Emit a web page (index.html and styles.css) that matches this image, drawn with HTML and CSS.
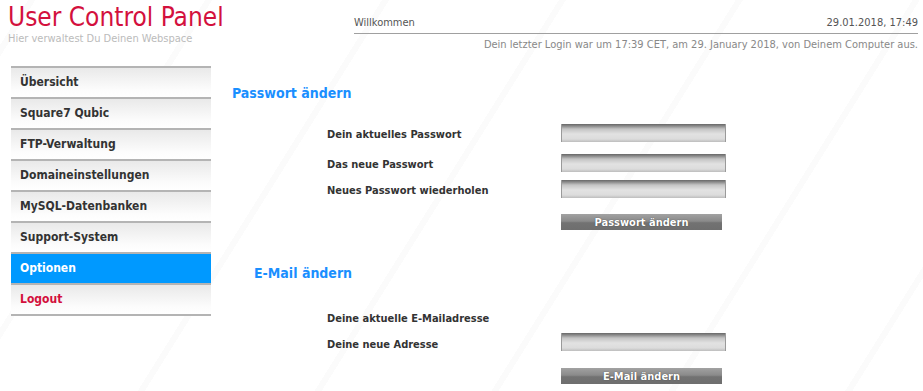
FILE: index.html
```html
<!DOCTYPE html>
<html lang="de">
<head>
  <meta charset="UTF-8" />
  <title>User Control Panel — Optionen</title>
  <link rel="stylesheet" href="styles.css">
</head>
<body>
  <header class="top">
    <div class="brand">
      <h1>User Control Panel</h1>
      <p>Hier verwaltest Du Deinen Webspace</p>
    </div>
    <div class="status">
      <div class="status-line">
        <span>Willkommen</span>
        <span>29.01.2018, 17:49</span>
      </div>
      <p class="last-login">Dein letzter Login war um 17:39 CET, am 29. January 2018, von Deinem Computer aus.</p>
    </div>
  </header>

  <div class="page">
    <nav class="menu">
      <a href="#">Übersicht</a>
      <a href="#">Square7 Qubic</a>
      <a href="#">FTP-Verwaltung</a>
      <a href="#">Domaineinstellungen</a>
      <a href="#">MySQL-Datenbanken</a>
      <a href="#">Support-System</a>
      <a href="#" class="active">Optionen</a>
      <a href="#" class="logout">Logout</a>
    </nav>

    <main class="content">
      <h2 class="pw-title">Passwort ändern</h2>
      <form class="form pw-form">
        <div class="row r1">
          <label>Dein aktuelles Passwort</label>
          <input type="password" />
        </div>
        <div class="row r2">
          <label>Das neue Passwort</label>
          <input type="password" />
        </div>
        <div class="row r3">
          <label>Neues Passwort wiederholen</label>
          <input type="password" />
        </div>
        <div class="row btn-row">
          <span></span>
          <button type="button">Passwort ändern</button>
        </div>
      </form>

      <h2 class="mail-title">E-Mail ändern</h2>
      <form class="form mail-form">
        <div class="row m1">
          <label>Deine aktuelle E-Mailadresse</label>
          <span></span>
        </div>
        <div class="row m2">
          <label>Deine neue Adresse</label>
          <input type="text" />
        </div>
        <div class="row btn-row mail-btn">
          <span></span>
          <button type="button">E-Mail ändern</button>
        </div>
      </form>
    </main>
  </div>
</body>
</html>
```

FILE: styles.css
```css
* {
  margin: 0;
  padding: 0;
  box-sizing: border-box;
}

body {
  font-family: Tahoma, "DejaVu Sans Condensed", "DejaVu Sans", sans-serif;
  font-size: 11px;
  color: #333;
  background-color: #fff;
  background-image:
    repeating-linear-gradient(-58deg, transparent 0, transparent 60px, rgba(0, 0, 0, 0.015) 60px, rgba(0, 0, 0, 0.015) 66px, transparent 66px, transparent 150px);
  min-height: 391px;
}

/* header */
.top {
  display: flex;
  padding-top: 3px;
}

.brand {
  width: 354px;
  padding-left: 8px;
}

.brand h1 {
  font-weight: normal;
  font-size: 26px;
  line-height: 28px;
  color: #d3103d;
}

.brand p {
  margin-top: 1px;
  font-size: 11px;
  color: #bbb;
}

.status {
  flex: 1;
  margin-right: 5px;
  padding-top: 13px;
}

.status-line {
  display: flex;
  justify-content: space-between;
  color: #555;
  padding-bottom: 4px;
  border-bottom: 1px solid #a0a0a0;
}

.last-login {
  text-align: right;
  color: #888;
  margin-top: 4px;
}

/* layout */
.page {
  display: flex;
  margin-top: 15px;
}

.menu {
  width: 200px;
  margin-left: 11px;
  border-top: 2px solid #b4b4b4;
  display: flex;
  flex-direction: column;
}

.menu a {
  display: block;
  height: 31px;
  line-height: 29px;
  padding-left: 9px;
  font-weight: bold;
  font-size: 12px;
  color: #333;
  text-decoration: none;
  background: linear-gradient(#e9e9e9, #fcfcfc 75%, #fff);
  border-bottom: 2px solid #b4b4b4;
}

.menu a.active {
  background: #0099ff;
  color: #fff;
}

.menu a.logout {
  color: #d3103d;
}

.content {
  flex: 1;
  padding-left: 21px;
}

h2 {
  font-size: 14px;
  font-weight: bold;
  color: #1a8fff;
}

.pw-title {
  margin-top: 19px;
}

.mail-title {
  margin-top: 35px;
  margin-left: 22px;
}

.form {
  margin-left: 95px;
}

.row {
  display: grid;
  grid-template-columns: 234px 165px;
  align-items: center;
}

.row label {
  font-weight: bold;
  padding-top: 2px;
}

.r1 { margin-top: 23px; }
.r2 { margin-top: 12px; }
.r3 { margin-top: 8px; }
.btn-row { margin-top: 16px; }

.m1 { margin-top: 29px; height: 14px; }
.m2 { margin-top: 9px; }
.m2 label { padding-top: 4px; }
.mail-btn { margin-top: 17px; }

input {
  display: block;
  width: 165px;
  height: 18px;
  border: none;
  border-left: 1px solid #9a9a9a;
  border-right: 1px solid #9a9a9a;
  background: linear-gradient(#676767 0, #8a8a8a 2px, #c4c4c4 5px, #e2e2e2 10px, #dcdcdc 15px, #bdbdbd 100%);
  outline: none;
}

button {
  display: block;
  width: 161px;
  height: 16px;
  border: none;
  font-family: inherit;
  font-size: 11px;
  font-weight: bold;
  color: #fff;
  text-shadow: 0 0 1px #333;
  background: linear-gradient(#a2a2a2, #8a8a8a 45%, #727272 55%, #6e6e6e);
  cursor: pointer;
}
```
